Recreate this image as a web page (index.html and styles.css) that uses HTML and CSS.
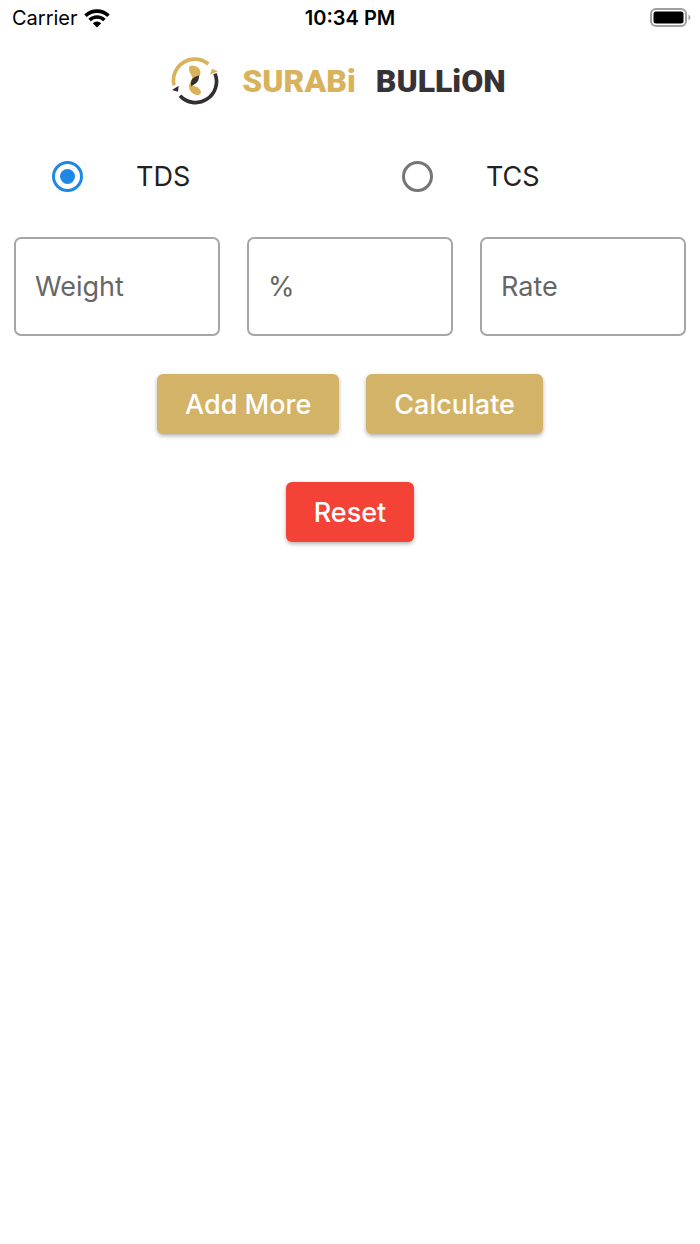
FILE: index.html
```html
<!DOCTYPE html>
<html lang="en">
<head>
<meta charset="utf-8">
<meta name="viewport" content="width=device-width, initial-scale=1">
<title>Surabi Bullion</title>
<link rel="stylesheet" href="styles.css">
</head>
<body>
<div class="status">
  <div class="carrier">
    <span>Carrier</span>
    <svg class="wifi" viewBox="0 0 26 19" aria-hidden="true">
      <path d="M1.5 6.8a16.5 16.5 0 0 1 23 0M5.6 11a10.6 10.6 0 0 1 14.8 0" fill="none" stroke="#000" stroke-width="3.6"/>
      <path d="M13 18.6l-4.2-4.3a6 6 0 0 1 8.4 0z"/>
    </svg>
  </div>
  <time class="clock">10:34 PM</time>
  <svg class="battery" viewBox="0 0 42 20" aria-hidden="true">
    <rect x="1" y="1" width="35" height="17" rx="5" fill="#fff" stroke="#a0a0a0" stroke-width="2"/>
    <rect x="3.5" y="3.5" width="30" height="12" rx="2.5"/>
    <path d="M38.5 6.5q4 3 0 6z" fill="#a0a0a0"/>
  </svg>
</div>
<header class="brand">
  <svg class="mark" viewBox="17 21 150 150" aria-hidden="true">
    <g fill="none" stroke-width="11">
      <path d="M132 45A64 64 0 0 0 29 109" stroke="#d8b25c"/>
      <path d="M152 74A63 63 0 0 1 47 140" stroke="#322e31"/>
    </g>
    <path d="M143 59L161 67L137 77Z" fill="#d8b25c"/>
    <path d="M23 123L43 110L41 128Z" fill="#322e31"/>
    <path d="M74 58C74 48 84 49 92 51C107 55 112 70 106 81C99 85 90 86 83 96C88 80 72 72 74 58Z" fill="#d8b25c"/>
    <path d="M81 96C72 106 72 118 80 128C90 139 109 143 110 130C107 116 94 110 84 111Z" fill="#d8b25c"/>
    <path d="M104 79C105 91 101 99 93 104C87 107 84 109 82 113C77 103 80 92 87 87C93 83 98 83 104 79Z" fill="#322e31"/>
  </svg>
  <h1 class="name"><span class="gold">SURABi</span><span>BULLiON</span></h1>
</header>
<form class="form">
  <div class="choices">
    <label class="choice"><input class="radio" type="radio" name="tax" checked><span>TDS</span></label>
    <label class="choice"><input class="radio" type="radio" name="tax"><span>TCS</span></label>
  </div>
  <div class="fields">
    <input class="field" type="text" placeholder="Weight" aria-label="Weight">
    <input class="field" type="text" placeholder="%" aria-label="Percent">
    <input class="field" type="text" placeholder="Rate" aria-label="Rate">
  </div>
  <div class="actions">
    <button class="button" type="button">Add More</button>
    <button class="button" type="button">Calculate</button>
  </div>
  <div class="actions">
    <button class="button danger" type="reset">Reset</button>
  </div>
</form>
</body>
</html>
```
FILE: styles.css
```css
* { box-sizing: border-box; }
body {
  margin: 0;
  background: #fff;
  color: #212121;
  font-family: Inter, "Liberation Sans", sans-serif;
  font-size: 27px;
}
.status {
  display: grid;
  grid-template-columns: 1fr auto 1fr;
  align-items: center;
  height: 36px;
  padding: 0 8px;
  color: #000;
  font-size: 20px;
}
.carrier { display: flex; align-items: center; gap: 6px; padding-left: 4px; }
.wifi { width: 26px; height: 19px; }
.clock { font-weight: 600; }
.battery { width: 42px; height: 20px; justify-self: end; }
.brand {
  display: flex;
  align-items: center;
  justify-content: center;
  gap: 22px;
  padding: 20px 24px 0 0;
}
.mark { width: 50px; height: 50px; }
.name {
  display: flex;
  gap: 20px;
  margin: 0;
  color: #373235;
  font-family: Roboto, "Liberation Sans", sans-serif;
  font-size: 32px;
  font-weight: 900;
  line-height: 40px;
}
.gold { color: #d8b25c; }
.choices {
  display: grid;
  grid-template-columns: 1fr 1fr;
  padding-top: 50px;
}
.choice {
  display: flex;
  align-items: center;
  gap: 53px;
  height: 40px;
  padding-left: 52px;
}
.radio {
  appearance: none;
  display: grid;
  place-items: center;
  width: 31px;
  height: 31px;
  margin: 0;
  border: 3px solid #757575;
  border-radius: 50%;
}
.radio:checked { border-color: #1e88e5; }
.radio:checked::before {
  content: "";
  width: 15px;
  height: 15px;
  border-radius: 50%;
  background: #1e88e5;
}
.fields {
  display: grid;
  grid-template-columns: repeat(3, 1fr);
  gap: 27px;
  padding: 41px 14px 38px;
}
.field {
  width: 100%;
  min-width: 0;
  height: 99px;
  padding: 0 19px;
  border: 2px solid #a6a6a6;
  border-radius: 7px;
  background: #fff;
  color: inherit;
  font: inherit;
}
.field::placeholder { color: #666; opacity: 1; }
.actions {
  display: flex;
  justify-content: center;
  gap: 27px;
  padding-bottom: 48px;
}
.button {
  height: 60px;
  padding: 0 28px;
  border: 0;
  border-radius: 6px;
  background: #d3b368;
  color: #fff;
  box-shadow: 0 2px 4px rgba(0, 0, 0, .3);
  font: inherit;
  font-weight: 500;
}
.danger { background: #f44336; }
```
